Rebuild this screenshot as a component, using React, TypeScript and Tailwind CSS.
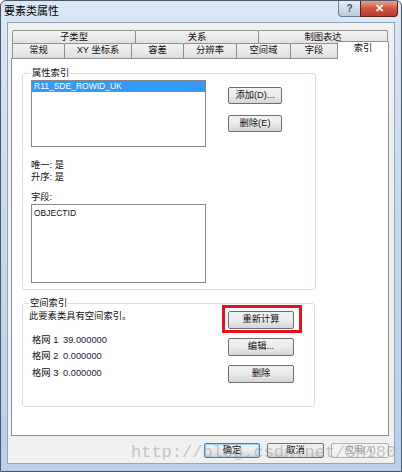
import React from 'react';

const FONT = '"Liberation Sans", "Noto Sans CJK SC", sans-serif';

const topTabs = [
  { label: '子类型', w: 'w-[124px]' },
  { label: '关系', w: 'w-[124px]' },
  { label: '制图表达', w: 'w-[130px]' },
];

const bottomTabs = [
  { label: '常规', w: 'w-[53px]' },
  { label: 'XY 坐标系', w: 'w-[68px]' },
  { label: '容差', w: 'w-[53px]' },
  { label: '分辨率', w: 'w-[54px]' },
  { label: '空间域', w: 'w-[55px]' },
  { label: '字段', w: 'w-[48px]' },
];

function WinButton({
  children,
  className = '',
}: {
  children: React.ReactNode;
  className?: string;
}) {
  return (
    <div
      className={`flex items-center justify-center rounded-[2px] border border-[#707070] bg-gradient-to-b from-[#f2f2f2] via-[#ebebeb] to-[#d6d6d6] text-[9.3px] leading-none text-[#111] ${className}`}
    >
      {children}
    </div>
  );
}

function Tab({ label, w, first }: { label: string; w: string; first?: boolean }) {
  return (
    <div
      className={`${w} ${first ? '' : '-ml-px'} flex h-full items-center justify-center rounded-t-[2px] border border-b-0 border-[#8c8e94] bg-gradient-to-b from-[#f3f3f3] to-[#e0e0e0] text-[9.3px] leading-none text-[#111]`}
    >
      {label}
    </div>
  );
}

export default function App() {
  return (
    <div
      className="relative flex h-[472px] w-[402px] flex-col overflow-hidden rounded-t-[6px] border border-[#4a5869] bg-gradient-to-b from-[#dbe7f4] via-[#c4d8ee] to-[#b9d0ea]"
      style={{ fontFamily: FONT }}
    >
      {/* Title bar */}
      <div className="flex h-[21px] shrink-0 items-start justify-between">
        <div className="pl-[3px] pt-[4px] text-[11px] leading-[13px] text-black">要素类属性</div>
        <div className="flex pr-[3px]">
          <div className="flex h-[16px] w-[23px] items-center justify-center rounded-bl-[4px] border border-t-0 border-[#6d7c8f] bg-gradient-to-b from-[#e6eef7] to-[#b9cbe0] text-[10px] font-bold leading-none text-[#44546a]">
            ?
          </div>
          <div className="-ml-px flex h-[16px] w-[38px] items-center justify-center rounded-br-[4px] border border-t-0 border-[#5b2020] bg-gradient-to-b from-[#e8a493] via-[#d0533d] to-[#c0392b] text-[11px] font-bold leading-none text-white">
            ✕
          </div>
        </div>
      </div>

      {/* Client area */}
      <div className="mx-[6px] flex h-[442px] flex-col border border-[#8fa6c1] bg-[#f0f0f0]">
        <div className="ml-[3px] mt-[7px] w-[378px]">
          {/* top tab row */}
          <div className="flex h-[14px] pl-px">
            {topTabs.map((t, i) => (
              <Tab key={t.label} label={t.label} w={t.w} first={i === 0} />
            ))}
          </div>
          {/* bottom tab row */}
          <div className="-mt-px flex h-[15px] items-end pl-px">
            {bottomTabs.map((t, i) => (
              <Tab key={t.label} label={t.label} w={t.w} first={i === 0} />
            ))}
            <div className="relative z-10 -mb-px -ml-px flex h-[18px] w-[52px] items-start justify-center rounded-t-[2px] border border-b-0 border-[#8c8e94] bg-white pt-[2px] text-[9.3px] leading-none text-[#111]">
              索引
            </div>
          </div>

          {/* Tab panel */}
          <div className="h-[378px] border border-[#8c8e94] bg-white pl-[10px] pt-[14px]">
            {/* 属性索引 */}
            <div className="relative h-[217px] w-[294px] rounded-[3px] border border-[#d5dfe5]">
              <span className="absolute -top-[7px] left-[8px] bg-white px-px text-[9.3px] leading-[12px] text-[#111]">
                属性索引
              </span>
              <div className="flex pl-[8px] pt-[6px]">
                <div className="h-[67px] w-[175px] border border-[#828790] bg-white">
                  <div className="h-[11px] bg-[#3399ff] pl-[2px] text-[8.5px] leading-[11px] text-white">
                    R11_SDE_ROWID_UK
                  </div>
                </div>
                <div className="ml-[22px] flex flex-col gap-[11px] pt-[7px]">
                  <WinButton className="h-[17px] w-[54px]">添加(D)...</WinButton>
                  <WinButton className="h-[17px] w-[54px]">删除(E)</WinButton>
                </div>
              </div>
              <div className="pl-[8px] text-[9.3px] leading-[12px] text-[#111]">
                <div className="mt-[12px]">唯一: 是</div>
                <div>升序: 是</div>
                <div className="mt-[8px]">字段:</div>
                <div className="mt-px h-[79px] w-[175px] border border-[#828790] bg-white pl-[2px] pt-[3px] text-[8.5px] leading-[11px]">
                  OBJECTID
                </div>
              </div>
            </div>

            {/* 空间索引 */}
            <div className="relative mt-[13px] flex h-[104px] w-[293px] rounded-[3px] border border-[#d5dfe5]">
              <span className="absolute -top-[7px] left-[6px] bg-white px-px text-[9.3px] leading-[12px] text-[#111]">
                空间索引
              </span>
              <div className="w-[205px] pl-[6px] pt-[6px] text-[9.3px] leading-[12px] text-[#111]">
                <div>此要素类具有空间索引。</div>
                <div className="flex flex-col pl-[3px]">
                  <div className="mt-[12px] flex">
                    <span className="w-[31px]">格网 1</span>
                    <span className="text-[#1c1c3a]">39.000000</span>
                  </div>
                  <div className="mt-[4px] flex">
                    <span className="w-[31px]">格网 2</span>
                    <span className="text-[#1c1c3a]">0.000000</span>
                  </div>
                  <div className="mt-[5px] flex">
                    <span className="w-[31px]">格网 3</span>
                    <span className="text-[#1c1c3a]">0.000000</span>
                  </div>
                </div>
              </div>
              <div className="relative flex flex-col gap-[9px] pt-[7px]">
                <WinButton className="h-[18px] w-[66px]">重新计算</WinButton>
                <WinButton className="h-[18px] w-[66px]">编辑...</WinButton>
                <WinButton className="h-[18px] w-[66px]">删除</WinButton>
                {/* red highlight */}
                <div className="pointer-events-none absolute left-[-6px] top-[1px] h-[28px] w-[80px] border-[3px] border-[#e8101a]" />
              </div>
            </div>
          </div>
        </div>

        {/* Dialog buttons */}
        <div className="mt-[7px] flex justify-end gap-[7px] pr-[5px]">
          <WinButton className="h-[15px] w-[56px] !border-[#3c7fb1] shadow-[inset_0_0_0_1px_#9fd5f5]">确定</WinButton>
          <WinButton className="h-[15px] w-[57px]">取消</WinButton>
          <div className="flex h-[15px] w-[58px] items-center justify-center rounded-[2px] border border-[#adb2b5] bg-[#f4f4f4] text-[9.3px] leading-none text-[#9a9a9a]">
            应用(A)
          </div>
        </div>
      </div>

      {/* watermark */}
      <div
        className="pointer-events-none absolute left-[130px] top-[442px] whitespace-nowrap text-[17px] leading-[20px] text-[#9a9a9a] opacity-50"
        style={{ fontFamily: '"Liberation Mono", monospace' }}
      >
        http://blog.csdn.net/SHI80
      </div>
    </div>
  );
}
